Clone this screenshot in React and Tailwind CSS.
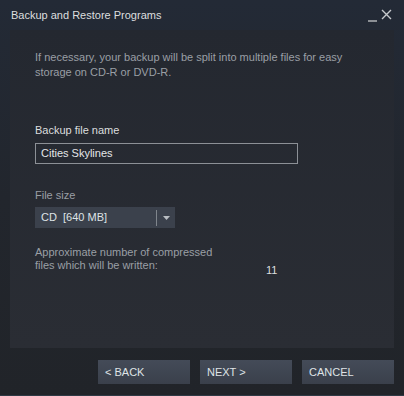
import React from 'react'

const font = { fontFamily: '"Liberation Sans", Arial, sans-serif' }

function Button({ children }) {
  return (
    <button className="w-[92px] h-[24px] bg-gradient-to-b from-[#444b58] to-[#3a404b] text-left pl-[7px] text-[11px] text-[#dfe3e6]">
      {children}
    </button>
  )
}

export default function App() {
  return (
    <div
      className="w-[404px] h-[396px] flex flex-col bg-gradient-to-b from-[#232a36] via-[#22262d] to-[#212429] border-b border-[#2f3a45]"
      style={font}
    >
      <div className="h-[30px] flex items-center justify-between pl-[11px] pr-[12px]">
        <span className="text-[11px] text-[#dcdedf]">Backup and Restore Programs</span>
        <div className="flex items-end gap-[4px] text-[#b8bcbf]">
          <span className="block w-[9px] h-[2px] bg-[#8b8f94] mt-[10px]" />
          <svg width="11" height="11" viewBox="0 0 11 11" className="mb-[2px]">
            <path d="M1 1 L10 10 M10 1 L1 10" stroke="#c7cacd" strokeWidth="1.4" />
          </svg>
        </div>
      </div>

      <div className="mx-[10px] h-[318px] bg-gradient-to-b from-[#242830] to-[#2a2d34] pl-[25px] pt-[20px]">
        <p className="text-[11px] leading-[15px] text-[#9a9fa5] w-[320px]">
          If necessary, your backup will be split into multiple files for easy storage on CD-R or DVD-R.
        </p>

        <div className="mt-[42px] text-[11px] text-[#dcdedf]">Backup file name</div>
        <div className="mt-[4px] w-[263px] h-[21px] border border-[#8c9096] flex items-center pl-[5px] text-[11px] text-[#e4e6e8]">
          Cities Skylines
        </div>

        <div className="mt-[23px] text-[11px] text-[#9a9fa5]">File size</div>
        <div className="mt-[4px] w-[140px] h-[21px] bg-[#3b414c] flex items-center text-[11px] text-[#dfe3e6]">
          <span className="flex-1 pl-[6px]">CD&nbsp;&nbsp;[640 MB]</span>
          <span className="w-[1px] h-[16px] bg-[#7f858c]" />
          <span className="w-[18px] flex justify-center">
            <svg width="7" height="4" viewBox="0 0 7 4">
              <path d="M0 0 H7 L3.5 4 Z" fill="#b9bdc2" />
            </svg>
          </span>
        </div>

        <div className="mt-[18px] flex items-end text-[11px] text-[#9a9fa5]">
          <p className="leading-[13px] w-[185px]">
            Approximate number of compressed files which will be written:
          </p>
          <span className="ml-[46px] mb-[-6px] text-[#dcdedf]">11</span>
        </div>
      </div>

      <div className="flex justify-end gap-[10px] pr-[10px] pt-[12px]">
        <Button>&lt; BACK</Button>
        <Button>NEXT &gt;</Button>
        <Button>CANCEL</Button>
      </div>
    </div>
  )
}
